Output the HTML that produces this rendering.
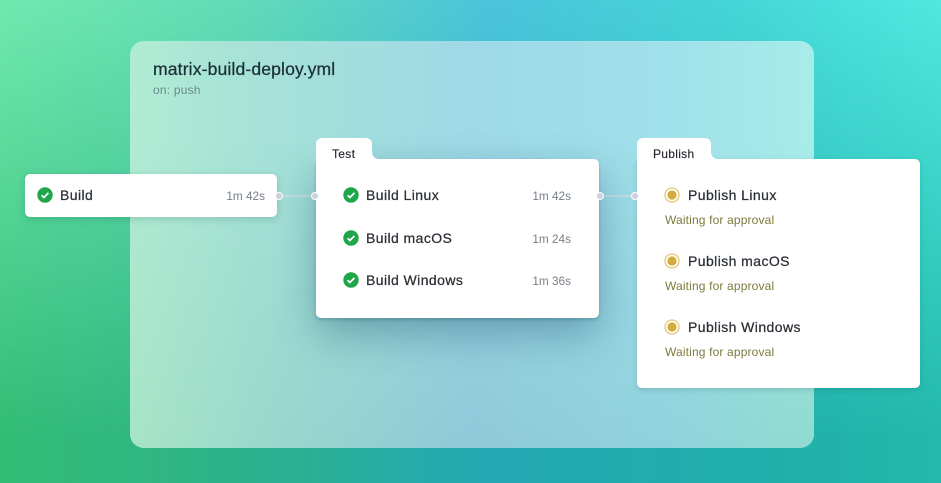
<!DOCTYPE html>
<html><head><meta charset="utf-8"><style>
html,body{margin:0;padding:0}
#s{position:relative;width:941px;height:483px;overflow:hidden;font-family:"Liberation Sans",sans-serif;filter:blur(.3px);
background:linear-gradient(90deg,#70eaae 0%,#62dcb8 25%,#4cc4dc 52%,#44d6d8 78%,#50e9df 100%)}
#b{position:absolute;left:0;top:0;width:941px;height:483px;
background:linear-gradient(90deg,#33bc74 0%,#2eb28a 25%,#22a8b4 52%,#20aeaa 78%,#22b8aa 100%);
-webkit-mask-image:linear-gradient(180deg,transparent 0%,#000 90%);mask-image:linear-gradient(180deg,transparent 0%,#000 90%)}
#p{position:absolute;left:130px;top:41px;width:684px;height:407px;border-radius:14px;overflow:hidden;
background:linear-gradient(90deg,#b0ecd4 0%,#a6e2d6 18%,#9fd9e8 50%,#a0e0ea 78%,#a8ecea 100%)}
#p2{position:absolute;left:0;top:0;right:0;bottom:0;
background:linear-gradient(90deg,#a6e4c6 0%,#98d6cc 22%,#8fc8d8 50%,#90d2dc 78%,#90dad0 100%);
-webkit-mask-image:linear-gradient(180deg,transparent 25%,#000 100%);mask-image:linear-gradient(180deg,transparent 25%,#000 100%)}
.a{position:absolute;white-space:nowrap}
.h{left:153px;top:60px;font-size:17.6px;line-height:19px;color:#1b2f36;letter-spacing:.12px;-webkit-text-stroke:.25px #1b2f36}
.o{left:153px;top:83px;font-size:12px;line-height:15px;color:#6b8a8c;letter-spacing:.2px}
.c{position:absolute;background:#fff;border-radius:5px}
.tb{position:absolute;background:#fff;border-radius:6px 6px 0 0}
.cv{position:absolute;width:6px;height:6px;top:153px;background:radial-gradient(circle at 100% 0,transparent 5.5px,#fff 6px)}
.n{font-size:14px;line-height:18px;color:#2a2f35;letter-spacing:.42px;-webkit-text-stroke:.25px #2a2f35}
.d{font-size:11.8px;line-height:16px;color:#767e88;letter-spacing:0;text-align:right}
.w{font-size:12px;line-height:15px;color:#7d7a3c;letter-spacing:.15px}
.l{font-size:12px;line-height:15px;color:#24292f;letter-spacing:.3px;-webkit-text-stroke:.15px #24292f}
.i{position:absolute;width:16px;height:16px}
.ln{position:absolute;height:2px;background:#d0dde4;opacity:.8}
.dt{position:absolute;width:6px;height:6px;border-radius:50%;background:#cdd2de;border:1.5px solid rgba(255,255,255,.9)}
</style></head><body><div id="s">
<div id="b"></div>
<div id="p"><div id="p2"></div></div>
<div class="a h">matrix-build-deploy.yml</div>
<div class="a o">on: push</div>

<div class="ln" style="left:282px;top:195px;width:30px"></div>
<div class="ln" style="left:604px;top:195px;width:30px"></div>

<div class="c" style="left:25px;top:174px;width:252px;height:43px;box-shadow:0 2px 8px rgba(20,70,70,.2)"></div>
<div class="c" style="left:316px;top:159px;width:283px;height:159px;box-shadow:0 2px 3px rgba(20,70,90,.25),0 16px 40px rgba(20,70,100,.36)"></div>
<div class="tb" style="left:316px;top:138px;width:56px;height:24px"></div>
<div class="cv" style="left:372px"></div>
<div class="c" style="left:637px;top:159px;width:283px;height:229px;box-shadow:0 2px 6px rgba(20,70,70,.18)"></div>
<div class="tb" style="left:637px;top:138px;width:74px;height:24px"></div>
<div class="cv" style="left:711px"></div>

<div class="dt" style="left:274.5px;top:191.5px"></div>
<div class="dt" style="left:310.5px;top:191.5px"></div>
<div class="dt" style="left:596px;top:191.5px"></div>
<div class="dt" style="left:631px;top:191.5px"></div>

<svg class="i" style="left:37px;top:187px" viewBox="0 0 16 16"><circle cx="8" cy="8" r="7.7" fill="#1fa64a"/><path d="M4.6 8.3l2.3 2.2 4.5-4.6" fill="none" stroke="#fff" stroke-width="1.7"/></svg>
<div class="a n" style="left:60px;top:186px">Build</div>
<div class="a d" style="right:676px;top:188px">1m 42s</div>

<div class="a l" style="left:332px;top:147px">Test</div>
<svg class="i" style="left:343px;top:187px" viewBox="0 0 16 16"><circle cx="8" cy="8" r="7.7" fill="#1fa64a"/><path d="M4.6 8.3l2.3 2.2 4.5-4.6" fill="none" stroke="#fff" stroke-width="1.7"/></svg>
<div class="a n" style="left:366px;top:186px">Build Linux</div>
<div class="a d" style="right:370px;top:188px">1m 42s</div>
<svg class="i" style="left:343px;top:230px" viewBox="0 0 16 16"><circle cx="8" cy="8" r="7.7" fill="#1fa64a"/><path d="M4.6 8.3l2.3 2.2 4.5-4.6" fill="none" stroke="#fff" stroke-width="1.7"/></svg>
<div class="a n" style="left:366px;top:229px">Build macOS</div>
<div class="a d" style="right:370px;top:231px">1m 24s</div>
<svg class="i" style="left:343px;top:272px" viewBox="0 0 16 16"><circle cx="8" cy="8" r="7.7" fill="#1fa64a"/><path d="M4.6 8.3l2.3 2.2 4.5-4.6" fill="none" stroke="#fff" stroke-width="1.7"/></svg>
<div class="a n" style="left:366px;top:271px">Build Windows</div>
<div class="a d" style="right:370px;top:273px">1m 36s</div>

<div class="a l" style="left:653px;top:147px">Publish</div>
<svg class="i" style="left:664px;top:187px" viewBox="0 0 16 16"><circle cx="8" cy="8" r="7" fill="#fff" stroke="#e6d088" stroke-width="1.5"/><circle cx="8" cy="8" r="4.6" fill="#d4ab3c"/></svg>
<div class="a n" style="left:688px;top:186px">Publish Linux</div>
<div class="a w" style="left:665px;top:213px">Waiting for approval</div>
<svg class="i" style="left:664px;top:253px" viewBox="0 0 16 16"><circle cx="8" cy="8" r="7" fill="#fff" stroke="#e6d088" stroke-width="1.5"/><circle cx="8" cy="8" r="4.6" fill="#d4ab3c"/></svg>
<div class="a n" style="left:688px;top:252px">Publish macOS</div>
<div class="a w" style="left:665px;top:279px">Waiting for approval</div>
<svg class="i" style="left:664px;top:319px" viewBox="0 0 16 16"><circle cx="8" cy="8" r="7" fill="#fff" stroke="#e6d088" stroke-width="1.5"/><circle cx="8" cy="8" r="4.6" fill="#d4ab3c"/></svg>
<div class="a n" style="left:688px;top:318px">Publish Windows</div>
<div class="a w" style="left:665px;top:345px">Waiting for approval</div>
</div></body></html>
